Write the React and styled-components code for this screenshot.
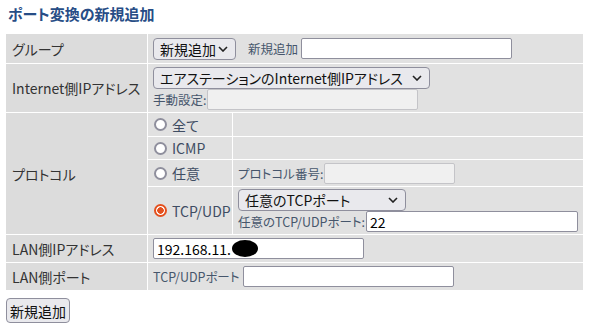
import styled, { createGlobalStyle } from 'styled-components'

const GlobalStyle = createGlobalStyle`
  * { box-sizing: border-box; }
  body {
    margin: 0;
    background: #fff;
    font-family: "Noto Sans CJK JP", "Noto Sans", sans-serif;
    font-feature-settings: "palt";
  }
`

const Page = styled.div`
  padding: 4px 0 0 6px;
`

const Title = styled.h1`
  margin: 0 0 10px 2px;
  height: 20px;
  line-height: 20px;
  font-size: 15px;
  font-weight: bold;
  color: #274d86;
`

const Form = styled.div`
  display: grid;
  grid-template-columns: 141px 84px 350px;
  grid-template-rows: 29px 48px 23px 22px 26px 47px 27px 27px;
  gap: 1px;
  width: 577px;
`

const Label = styled.div`
  grid-row: ${(p) => p.$rows || 'auto'};
  display: flex;
  align-items: center;
  padding-left: 6px;
  background: #dcdcdc;
  color: #333;
  font-size: 14px;
  white-space: nowrap;
`

const Cell = styled.div`
  grid-column: ${(p) => p.$span || 'auto'};
  display: flex;
  flex-direction: ${(p) => (p.$stack ? 'column' : 'row')};
  justify-content: ${(p) => (p.$stack ? 'center' : 'flex-start')};
  align-items: ${(p) => (p.$stack ? 'flex-start' : 'center')};
  padding-left: ${(p) => p.$pad || 5}px;
  background: #e1e1e1;
  white-space: nowrap;
`

const Line = styled.div`
  display: flex;
  align-items: center;
`

const Small = styled.span`
  font-size: 12.5px;
  color: #46566c;
  margin: ${(p) => p.$m || '0'};
`

const SelectBox = styled.div`
  display: inline-flex;
  align-items: center;
  justify-content: space-between;
  flex-shrink: 0;
  width: ${(p) => p.$w}px;
  height: 22px;
  padding: 0 7px 0 6px;
  border: 1px solid #8f8f9d;
  border-radius: 4px;
  background: #e9e9ed;
  color: #111;
  font-size: 14px;

  span {
    overflow: hidden;
  }
  svg {
    flex-shrink: 0;
  }
`

const Input = styled.div`
  display: inline-flex;
  align-items: center;
  flex-shrink: 0;
  width: ${(p) => p.$w}px;
  height: 21px;
  padding: 0 3px;
  border: 1px solid ${(p) => (p.$off ? '#c4c4c8' : '#8f8f9d')};
  border-radius: 2px;
  background: ${(p) => (p.$off ? '#f0f0f0' : '#fff')};
  color: #000;
  font-size: 14px;
`

const Redact = styled.span`
  display: inline-block;
  width: 26px;
  height: 17px;
  margin-left: 1px;
  border-radius: 50%;
  background: #000;
`

const Radio = styled.label`
  display: flex;
  align-items: center;
  gap: 5px;
  font-size: 14px;
  color: #3f4d63;
`

const Dot = styled.span`
  width: 13px;
  height: 13px;
  border-radius: 50%;
  border: 2px solid ${(p) => (p.$on ? '#e4501e' : '#8f8f9d')};
  background: ${(p) => (p.$on ? 'radial-gradient(circle, #e4501e 0 3px, #fff 3.5px)' : '#fff')};
`

const Button = styled.button`
  margin-top: 8px;
  height: 25px;
  padding: 0 3px;
  border: 1px solid #8f8f9d;
  border-radius: 4px;
  background: #e9e9ed;
  color: #111;
  font-family: inherit;
  font-feature-settings: "palt";
  font-size: 14px;
`

const Chevron = () => (
  <svg width="10" height="6" viewBox="0 0 10 6">
    <path d="M1 1l4 4 4-4" fill="none" stroke="#222" strokeWidth="1.6" />
  </svg>
)

const Select = ({ w, children }) => (
  <SelectBox $w={w}>
    <span>{children}</span>
    <Chevron />
  </SelectBox>
)

const App = () => {
  return (
    <Page>
      <GlobalStyle />
      <Title>ポート変換の新規追加</Title>
      <Form>
        <Label>グループ</Label>
        <Cell $span="2 / 4">
          <Select w={83}>新規追加</Select>
          <Small $m="0 3px 0 12px">新規追加</Small>
          <Input $w={211} />
        </Cell>

        <Label>Internet側IPアドレス</Label>
        <Cell $span="2 / 4" $stack>
          <Select w={277}>エアステーションのInternet側IPアドレス</Select>
          <Line>
            <Small $m="0 1px 0 0">手動設定:</Small>
            <Input $w={211} $off />
          </Line>
        </Cell>

        <Label $rows="3 / 7">プロトコル</Label>
        <Cell $pad={6}>
          <Radio><Dot />全て</Radio>
        </Cell>
        <Cell />
        <Cell $pad={6}>
          <Radio><Dot />ICMP</Radio>
        </Cell>
        <Cell />
        <Cell $pad={6}>
          <Radio><Dot />任意</Radio>
        </Cell>
        <Cell>
          <Small $m="0 1px 0 0">プロトコル番号:</Small>
          <Input $w={131} $off />
        </Cell>
        <Cell $pad={6}>
          <Radio><Dot $on />TCP/UDP</Radio>
        </Cell>
        <Cell $stack>
          <Select w={168}>任意のTCPポート</Select>
          <Line>
            <Small $m="0 1px 0 0">任意のTCP/UDPポート:</Small>
            <Input $w={212}>22</Input>
          </Line>
        </Cell>

        <Label>LAN側IPアドレス</Label>
        <Cell $span="2 / 4">
          <Input $w={211}>192.168.11.<Redact /></Input>
        </Cell>

        <Label>LAN側ポート</Label>
        <Cell $span="2 / 4">
          <Small $m="0 4px 0 0">TCP/UDPポート</Small>
          <Input $w={211} />
        </Cell>
      </Form>
      <Button>新規追加</Button>
    </Page>
  )
}

export default App
